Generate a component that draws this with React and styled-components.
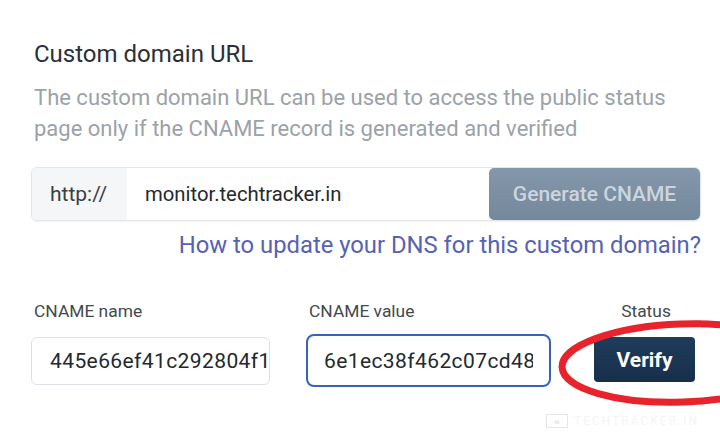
import React from "react";
import styled, { createGlobalStyle } from "styled-components";

const GlobalStyle = createGlobalStyle`
    body {
        margin: 0;
        background: #ffffff;
        font-family: Roboto, "Liberation Sans", sans-serif;
    }
`;

function App() {
    return (
        <>
            <GlobalStyle />
            <Page>
                <Title>Custom domain URL</Title>
                <Description>
                    The custom domain URL can be used to access the public
                    status page only if the CNAME record is generated and
                    verified
                </Description>

                <InputGroup>
                    <Addon>http://</Addon>
                    <DomainInput defaultValue="monitor.techtracker.in" />
                    <GenerateButton type="button">Generate CNAME</GenerateButton>
                </InputGroup>

                <HelpLink href="#">
                    How to update your DNS for this custom domain?
                </HelpLink>

                <RecordRow>
                    <Field $width="239px">
                        <Label>CNAME name</Label>
                        <RecordInput readOnly value="445e66ef41c292804f1a7c3d" />
                    </Field>
                    <Field $width="245px">
                        <Label>CNAME value</Label>
                        <RecordInput
                            $focused
                            readOnly
                            value="6e1ec38f462c07cd48a1b2e9"
                        />
                    </Field>
                    <StatusField>
                        <Label>Status</Label>
                        <VerifyButton type="button">Verify</VerifyButton>
                        <Marker viewBox="0 0 200 100" aria-hidden="true">
                            <ellipse
                                cx="128"
                                cy="50"
                                rx="120"
                                ry="39"
                                fill="none"
                                stroke="#e8232b"
                                strokeWidth="7"
                                transform="rotate(-2 128 50)"
                            />
                        </Marker>
                    </StatusField>
                </RecordRow>

                <Watermark>
                    <WatermarkBox>tk</WatermarkBox>
                    TECHTRACKER.IN
                </Watermark>
            </Page>
        </>
    );
}

const Page = styled.div`
    position: relative;
    width: 720px;
    height: 439px;
    overflow: hidden;
    padding: 40px 19px 0 31px;
    box-sizing: border-box;
`;

const Title = styled.h2`
    margin: 0 0 0 3px;
    font-size: 24px;
    line-height: 28px;
    font-weight: 400;
    color: #2b3036;
`;

const Description = styled.p`
    margin: 13.5px 0 0 3px;
    font-size: 22px;
    line-height: 31px;
    color: #9ba2a8;
    width: 660px;
`;

const InputGroup = styled.div`
    display: flex;
    margin-top: 23.5px;
    height: 54px;
    border: 1px solid #e3e6e9;
    border-radius: 6px;
    overflow: hidden;
    box-sizing: border-box;
    box-shadow: 0 1px 2px rgba(0, 0, 0, 0.06);
`;

const Addon = styled.div`
    display: flex;
    align-items: center;
    width: 95px;
    padding-left: 18px;
    box-sizing: border-box;
    background: #f5f6f7;
    color: #3a3f45;
    font-size: 21px;
`;

const DomainInput = styled.input`
    flex: 1;
    min-width: 0;
    border: none;
    outline: none;
    padding: 0 0 0 18px;
    font-family: inherit;
    font-size: 20.3px;
    color: #24292e;
    background: #fff;
`;

const GenerateButton = styled.button`
    width: 211px;
    margin: 0;
    border: none;
    border-radius: 5px;
    background: linear-gradient(#8497aa, #74889c);
    color: #ccd5de;
    font-family: inherit;
    font-size: 21px;
    font-weight: 500;
    cursor: not-allowed;
`;

const HelpLink = styled.a`
    display: block;
    margin-top: 10px;
    text-align: right;
    font-size: 23.8px;
    line-height: 28px;
    color: #5662b2;
    text-decoration: none;
`;

const RecordRow = styled.div`
    display: flex;
    align-items: flex-start;
    gap: 36px;
    margin-top: 42px;
`;

const Field = styled.div`
    display: flex;
    flex-direction: column;
    width: ${(p) => p.$width};
`;

const Label = styled.div`
    margin-left: 3px;
    font-size: 17.4px;
    line-height: 20px;
    color: #44494e;
    white-space: nowrap;
`;

const RecordInput = styled.input`
    padding: ${(p) => (p.$focused ? "0 16px 0 16px" : "0 2px 0 18px")};
    box-sizing: border-box;
    border: ${(p) => (p.$focused ? "2px solid #3b63b5" : "1px solid #dde1e5")};
    border-radius: ${(p) => (p.$focused ? "8px" : "6px")};
    margin-top: ${(p) => (p.$focused ? "13px" : "16px")};
    height: ${(p) => (p.$focused ? "53px" : "48px")};
    font-family: inherit;
    font-size: 21px;
    letter-spacing: 0.4px;
    color: #22292f;
    outline: none;
    background: #fff;
`;

const StatusField = styled.div`
    position: relative;
    display: flex;
    flex-direction: column;
    align-items: center;
    margin-left: 7px;
    width: 101px;
`;

const VerifyButton = styled.button`
    margin-top: 16px;
    width: 101px;
    height: 45px;
    border: none;
    border-radius: 4px;
    background: linear-gradient(#1f3c5c, #172f4a);
    color: #ffffff;
    font-family: inherit;
    font-size: 21px;
    font-weight: 700;
    cursor: pointer;
`;

const Marker = styled.svg`
    position: absolute;
    left: -40px;
    top: 12px;
    width: 200px;
    height: 100px;
    overflow: visible;
    pointer-events: none;
`;

const Watermark = styled.div`
    position: absolute;
    left: 546px;
    top: 414px;
    display: flex;
    align-items: center;
    gap: 6px;
    font-size: 12px;
    letter-spacing: 2px;
    color: #f5f5f6;
`;

const WatermarkBox = styled.span`
    display: inline-flex;
    align-items: center;
    justify-content: center;
    width: 20px;
    height: 12px;
    border: 1px solid #e6e6e6;
    font-size: 6px;
    letter-spacing: 0;
    color: #dadada;
`;

export default App;
